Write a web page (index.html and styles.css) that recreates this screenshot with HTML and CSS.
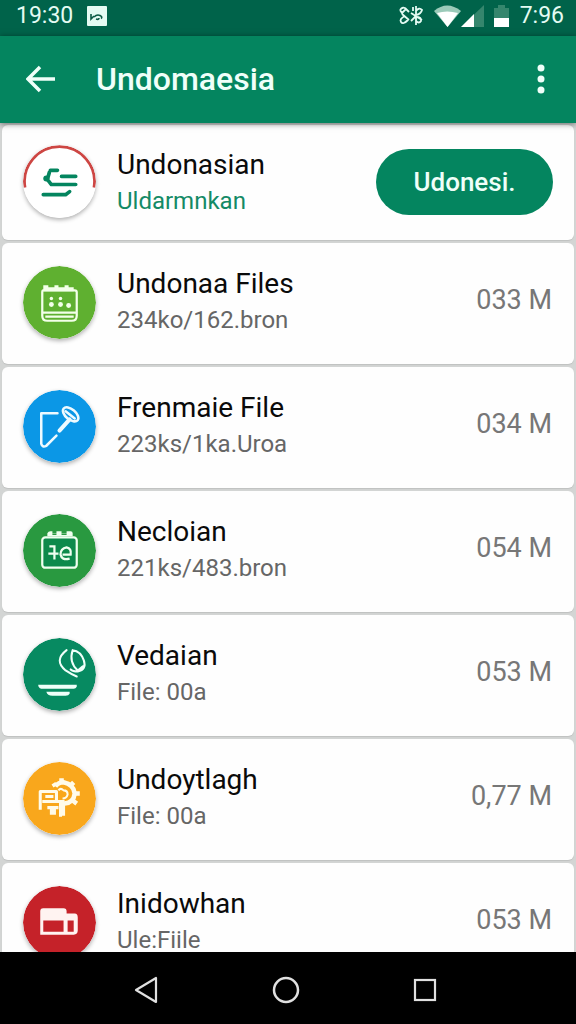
FILE: index.html
```html
<!DOCTYPE html>
<html lang="id">
<head>
<meta charset="utf-8">
<meta name="viewport" content="width=device-width, initial-scale=1">
<title>Undomaesia</title>
<link rel="stylesheet" href="styles.css">
</head>
<body>
<div class="status">
  <span class="time">19:30</span>
  <svg class="notice" width="20" height="20" viewBox="0 0 20 20"><rect width="20" height="20" rx="1" fill="#e4fbf3"/><path d="M4 8v5l3-3M7 11q3-3 6-1.500t1 3M9 13q3 1 3-1" fill="none" stroke="#0c5a45" stroke-width="1.600"/></svg>
  <div class="signals">
    <svg width="26" height="22" viewBox="0 0 26 22" fill="none" stroke="#e4fbf3" stroke-width="1.800"><path d="M2 5q3-4 6-1l-4 4-2-3M7 3l4 4M4 9l7 6M7 11q-6 3-4 6t7-2M13 8l11 7M18 1v19M15 2v4M13 16l5-5M18 10q5-1 6-5-3-3-6 1M18 12q6 0 5 4-2 3-5 0"/></svg>
    <svg width="27" height="22" viewBox="0 0 27 22"><path d="M0 6Q13-5 27 6L13.500 22z" fill="#9bcab9"/><path d="M3 8Q13 5 24 8L13.500 22z" fill="#fff"/></svg>
    <svg width="23" height="22" viewBox="0 0 23 22"><path d="M23 0v22H0z" fill="#35866d"/><path d="M13 9v13H0z" fill="#fff"/></svg>
    <svg width="15" height="22" viewBox="0 0 15 22"><path d="M0 3h4V0h7v3h4v19H0z" fill="#35866d"/><path d="M0 13h15v9H0z" fill="#fff"/></svg>
    <span class="time clock">7:96</span>
  </div>
</div>
<header class="appbar">
  <button class="icon-button" aria-label="Back"><svg width="30" height="28" viewBox="0 0 30 28"><path d="M14 2L2 14l12 12M2 14h27" fill="none" stroke="#effff9" stroke-width="3.500"/></svg></button>
  <h1>Undomaesia</h1>
  <button class="icon-button" aria-label="More options"><svg width="8" height="30" viewBox="0 0 8 30" fill="#effff9"><circle cx="4" cy="4" r="3.500"/><circle cx="4" cy="15" r="3.500"/><circle cx="4" cy="26" r="3.500"/></svg></button>
</header>
<main class="list">
  <article class="card card-top">
    <svg class="avatar" viewBox="0 0 72 72"><circle cx="36" cy="36" r="36" fill="#fff"/><path d="M2 42A34.500 34.500 0 1 1 70 42" fill="none" stroke="#cd4643" stroke-width="2.800"/><g fill="none" stroke="#04855f" stroke-width="3.600" stroke-linecap="round" stroke-linejoin="round"><path d="M27 25h7M26 27l-2 7 4 5h24M38 31h14M20 49h22l4-3"/></g><circle cx="23" cy="33" r="3" fill="#04855f"/></svg>
    <div class="text"><h2>Undonasian</h2><p class="accent">Uldarmnkan</p></div>
    <button class="pill">Udonesi.</button>
  </article>
  <article class="card">
    <svg class="avatar" viewBox="0 0 72 72"><circle cx="36" cy="36" r="36" fill="#5fb030"/><path d="M20 24h31q2 0 2 2v23q0 5-5 5H24q-5 0-5-5V26q0-2 1-2zM19 46h34M22 50h28" fill="none" stroke="#f3ffe9" stroke-width="2.200"/><path d="M20 22v-3h5v2h6v-2h4v2h6v-2h4v2h5v4H20z" fill="#f3ffe9"/><g fill="#f3ffe9"><circle cx="28" cy="32" r="1.700"/><circle cx="37" cy="32" r="1.700"/><circle cx="28" cy="38" r="2.400"/><circle cx="37" cy="38" r="2.400"/><circle cx="45" cy="39" r="2.400"/></g></svg>
    <div class="text"><h2>Undonaa Files</h2><p>234ko/162.bron</p></div>
    <span class="size">033 M</span>
  </article>
  <article class="card">
    <svg class="avatar" viewBox="0 0 72 72"><circle cx="36" cy="36" r="36" fill="#0b97e6"/><g fill="none" stroke="#eefaff" stroke-width="2.500" stroke-linecap="round" stroke-linejoin="round"><path d="M34 23H18v30q1 4 5 2l10-10"/><path d="M36 40l10-11" stroke-width="4"/><ellipse cx="47" cy="24" rx="9" ry="5" transform="rotate(40 47 24)"/><path d="M42 21l9 7"/></g></svg>
    <div class="text"><h2>Frenmaie File</h2><p>223ks/1ka.Uroa</p></div>
    <span class="size">034 M</span>
  </article>
  <article class="card">
    <svg class="avatar" viewBox="0 0 72 72"><circle cx="36" cy="36" r="36" fill="#299940"/><rect x="19" y="23" width="34" height="30" rx="3" fill="#0d8a4b" stroke="#effff0" stroke-width="2.200"/><path d="M24 22v-3q1-2 3-2h2v2h4v-2h5v2h5v-2h4q2 0 2 2v3z" fill="#effff0"/><path d="M29 20h4M38 20h5" stroke="#299940" stroke-width="1.500"/><path d="M26 32h5v13M25 39h10M39 40h8q1-6-4-7q-6 1-6 7q1 6 9 4" fill="none" stroke="#effff0" stroke-width="2.200"/></svg>
    <div class="text"><h2>Necloian</h2><p>221ks/483.bron</p></div>
    <span class="size">054 M</span>
  </article>
  <article class="card">
    <svg class="avatar" viewBox="0 0 72 72"><circle cx="36" cy="36" r="36" fill="#078a61"/><g fill="none" stroke="#effff9" stroke-width="2" stroke-linecap="round"><path d="M43 12Q30 22 42 32q6 4 11 6M49 12q-4 12 5 20M49 12q8 1 11 10t-6 11q-5 0-7-2M54 32l5-4"/></g><path d="M15 46h38v2q-1 2-3 2H18q-3-1-3-4zM23 53h23v2q-1 2-4 2H29q-5 0-6-4z" fill="#effff9"/></svg>
    <div class="text"><h2>Vedaian</h2><p>File: 00a</p></div>
    <span class="size">053 M</span>
  </article>
  <article class="card">
    <svg class="avatar" viewBox="0 0 72 72"><circle cx="36" cy="36" r="36" fill="#f9a71c"/><g fill="none" stroke="#fffbea" stroke-linejoin="round"><path d="M32 24q3-4 8-4 10 2 11 11-1 9-10 10" stroke-width="4.500"/><path d="M32 24l-2-3M38 20v-4M47 23l3-3M52 31h4M49 38l4 3" stroke-width="4.500"/><path d="M35 28q2-3 5 0 4 0 4 4-1 4-5 4" stroke-width="2"/><path d="M17 47V29h16v10M19 39h22M22 34h8M24 45h11M28 46v6M31 45v7M37 39v15M40 39v14" stroke-width="3"/></g></svg>
    <div class="text"><h2>Undoytlagh</h2><p>File: 00a</p></div>
    <span class="size">0,77 M</span>
  </article>
  <article class="card">
    <svg class="avatar" viewBox="0 0 72 72"><circle cx="36" cy="36" r="36" fill="#c52229"/><path fill-rule="evenodd" d="M20 22h20q3 0 3 3v2h8q3 0 3 4v13q0 4-4 4H17V25q0-3 3-3zM20 34v11h20V34zM44 34v11h6V34z" fill="#fff3f1"/></svg>
    <div class="text"><h2>Inidowhan</h2><p>Ule:Fiile</p></div>
    <span class="size">053 M</span>
  </article>
</main>
<nav class="navbar">
  <button class="icon-button" aria-label="Back"><svg width="26" height="28" viewBox="0 0 26 28"><path d="M23 2v24L3 14z" fill="none" stroke="#e0e0e0" stroke-width="2.200" stroke-linejoin="round"/></svg></button>
  <button class="icon-button" aria-label="Home"><svg width="28" height="28" viewBox="0 0 28 28"><circle cx="14" cy="14" r="12" fill="none" stroke="#e0e0e0" stroke-width="2.500"/></svg></button>
  <button class="icon-button" aria-label="Recent apps"><svg width="26" height="26" viewBox="0 0 26 26"><rect x="3" y="3" width="20" height="20" fill="none" stroke="#e0e0e0" stroke-width="2.200"/></svg></button>
</nav>
</body>
</html>
```
FILE: styles.css
```css
* { box-sizing: border-box; }
body {
  margin: 0;
  height: 100vh;
  display: flex;
  flex-direction: column;
  overflow: hidden;
  background: #d3d5d4;
  font-family: Roboto, "Liberation Sans", sans-serif;
}
h1, h2, p { margin: 0; font-weight: 400; white-space: nowrap; }
svg { display: block; flex: none; }
.status {
  flex: none;
  height: 36px;
  padding: 0 12px 4px 16px;
  display: flex;
  align-items: center;
  background: #00634a;
  color: #e4fbf3;
}
.time { font-size: 23px; line-height: 32px; }
.notice { margin-left: 14px; }
.signals { margin-left: auto; display: flex; align-items: center; }
.signals svg + svg { margin-left: 10px; }
.signals svg:nth-child(3) { margin-left: 0; }
.clock { margin-left: 11px; }
.appbar {
  flex: none;
  height: 87px;
  padding: 0 31px 2px 26px;
  display: flex;
  align-items: center;
  background: #04855f;
  color: #effff9;
  box-shadow: 0 1px 6px rgba(0, 0, 0, 0.5);
  z-index: 1;
}
.appbar h1 { flex: 1; margin-left: 40px; font-size: 32px; line-height: 40px; font-weight: 500; }
.icon-button { padding: 0; border: 0; background: none; cursor: pointer; }
.list {
  flex: 1;
  min-height: 0;
  overflow: hidden;
  display: flex;
  flex-direction: column;
  gap: 3px;
  padding: 2px 2px 0;
}
.card {
  flex: none;
  min-height: 121px;
  padding: 0 22px 3px 21px;
  display: flex;
  align-items: center;
  background: #fefefe;
  border-radius: 6px;
  box-shadow: 0 1px 1px #bfc1c0;
}
.card-top { min-height: 115px; padding: 0 21px 2px; }
.avatar {
  width: 73px;
  height: 73px;
  border-radius: 50%;
  box-shadow: 0 2px 4px rgba(0, 0, 0, 0.3);
}
.text { flex: 1; min-width: 0; margin-left: 21px; padding-bottom: 3px; }
.card-top .text { padding-bottom: 0; }
.text h2 { font-size: 28px; line-height: 38px; color: #0a0a0a; }
.text p { font-size: 24px; line-height: 34px; color: #666; }
.text .accent { color: #148a66; }
.size { padding-bottom: 4px; font-size: 27px; line-height: 36px; color: #777; }
.pill {
  width: 177px;
  height: 66px;
  border: 0;
  border-radius: 33px;
  background: #04855f;
  color: #effff9;
  font: 500 26px/36px Roboto, "Liberation Sans", sans-serif;
  cursor: pointer;
}
.navbar {
  flex: none;
  height: 72px;
  padding: 3px 138px 0 133px;
  display: flex;
  align-items: center;
  justify-content: space-between;
  background: #000;
}
```
